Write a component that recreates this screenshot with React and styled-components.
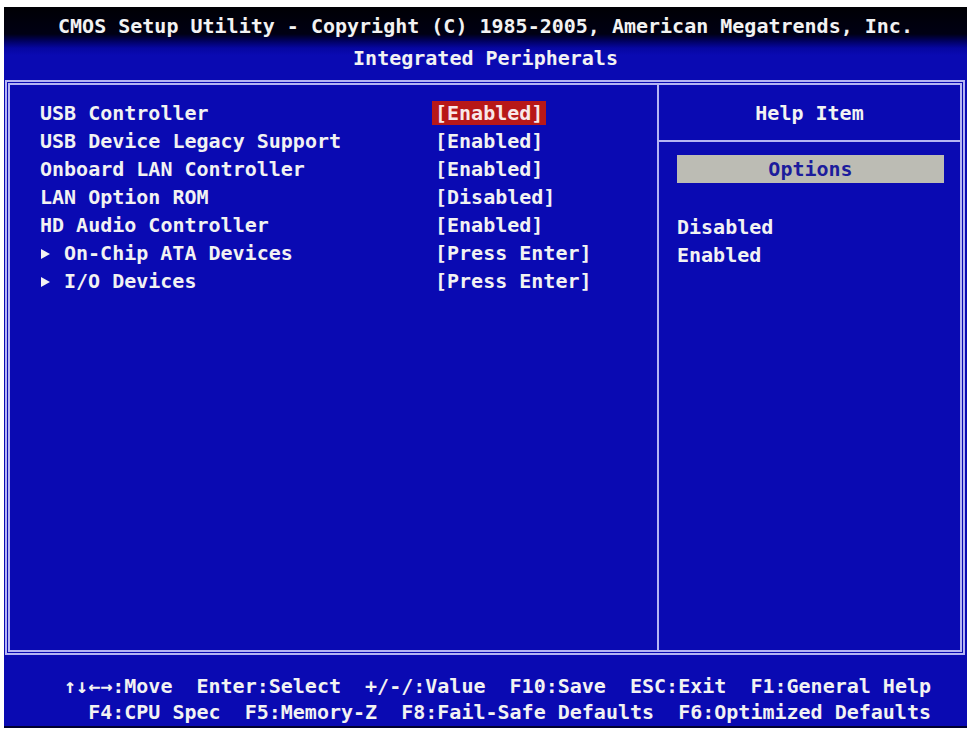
import React from "react";
import styled, { createGlobalStyle } from "styled-components";

const items = [
  { label: "USB Controller", value: "[Enabled]", active: true },
  { label: "USB Device Legacy Support", value: "[Enabled]" },
  { label: "Onboard LAN Controller", value: "[Enabled]" },
  { label: "LAN Option ROM", value: "[Disabled]" },
  { label: "HD Audio Controller", value: "[Enabled]" },
  { label: "On-Chip ATA Devices", value: "[Press Enter]", sub: true },
  { label: "I/O Devices", value: "[Press Enter]", sub: true },
];

const options = ["Disabled", "Enabled"];

export default () => (
  <>
    <Global />
    <Screen>
      <Header>
        <Title>CMOS Setup Utility - Copyright (C) 1985-2005, American Megatrends, Inc.</Title>
        <Subtitle>Integrated Peripherals</Subtitle>
      </Header>
      <Frame>
        <ItemPane>
          {items.map((it) => (
            <Row key={it.label}>
              <Label>
                {it.sub && <Arrow />}
                {it.label}
              </Label>
              <Value active={it.active}>{it.value}</Value>
            </Row>
          ))}
        </ItemPane>
        <HelpPane>
          <HelpHead>Help Item</HelpHead>
          <OptionsBar>Options</OptionsBar>
          <OptionList>
            {options.map((o) => (
              <Row key={o}>{o}</Row>
            ))}
          </OptionList>
        </HelpPane>
      </Frame>
      <Footer>
        <div>{"↑↓←→:Move  Enter:Select  +/-/:Value  F10:Save  ESC:Exit  F1:General Help"}</div>
        <div>{"F4:CPU Spec  F5:Memory-Z  F8:Fail-Safe Defaults  F6:Optimized Defaults"}</div>
      </Footer>
    </Screen>
  </>
);

const Global = createGlobalStyle`
  body {
    margin: 0;
    background: #fff;
  }
`;

const Screen = styled.div`
  margin: 7px 4px 0 4px;
  height: 721px;
  display: flex;
  flex-direction: column;
  background: #0a0ab2;
  color: #f2f2f2;
  font-family: "DejaVu Sans Mono", "Liberation Mono", monospace;
  font-weight: bold;
  font-size: 20px;
`;

const Header = styled.div`
  height: 73px;
  box-sizing: border-box;
  padding-top: 7px;
  text-align: center;
  white-space: pre;
  background: linear-gradient(
    to bottom,
    #000004 0px,
    #000014 27px,
    #000060 34px,
    #0606a0 41px,
    #0a0ab2 48px
  );
`;

const Title = styled.div`
  line-height: 24px;
`;

const Subtitle = styled.div`
  margin-top: 8px;
  line-height: 24px;
`;

const Frame = styled.div`
  height: 575px;
  box-sizing: border-box;
  margin: 0 2px 0 1px;
  border: 5px double #b4b4f4;
  display: flex;
`;

const ItemPane = styled.div`
  flex: 1;
  padding: 14px 0 0 30px;
`;

const Row = styled.div`
  height: 28px;
  display: flex;
  align-items: center;
  white-space: pre;
`;

const Label = styled.div`
  width: 392px;
  display: flex;
  align-items: center;
`;

const Arrow = styled.span`
  width: 0;
  height: 0;
  margin: 1px 14px 0 1px;
  border-top: 5px solid transparent;
  border-bottom: 5px solid transparent;
  border-left: 9px solid #f2f2f2;
`;

const Value = styled.span`
  height: 24px;
  line-height: 24px;
  padding: 0 3px;
  background: ${(p) => (p.active ? "#b81818" : "transparent")};
  color: ${(p) => (p.active ? "#f8e8e8" : "inherit")};
`;

const HelpPane = styled.div`
  width: 301px;
  border-left: 2px solid #b4b4f4;
  display: flex;
  flex-direction: column;
`;

const HelpHead = styled.div`
  height: 55px;
  border-bottom: 2px solid #b4b4f4;
  display: flex;
  align-items: center;
  justify-content: center;
`;

const OptionsBar = styled.div`
  margin: 13px 16px 0 18px;
  height: 28px;
  line-height: 28px;
  text-align: center;
  background: #bcbcb4;
  color: #1c1c9c;
`;

const OptionList = styled.div`
  margin-top: 30px;
  padding-left: 18px;
`;

const Footer = styled.div`
  flex: 1;
  padding: 18px 36px 0 0;
  text-align: right;
  line-height: 26px;
  white-space: pre;
  border-bottom: 2px solid #000030;
`;
